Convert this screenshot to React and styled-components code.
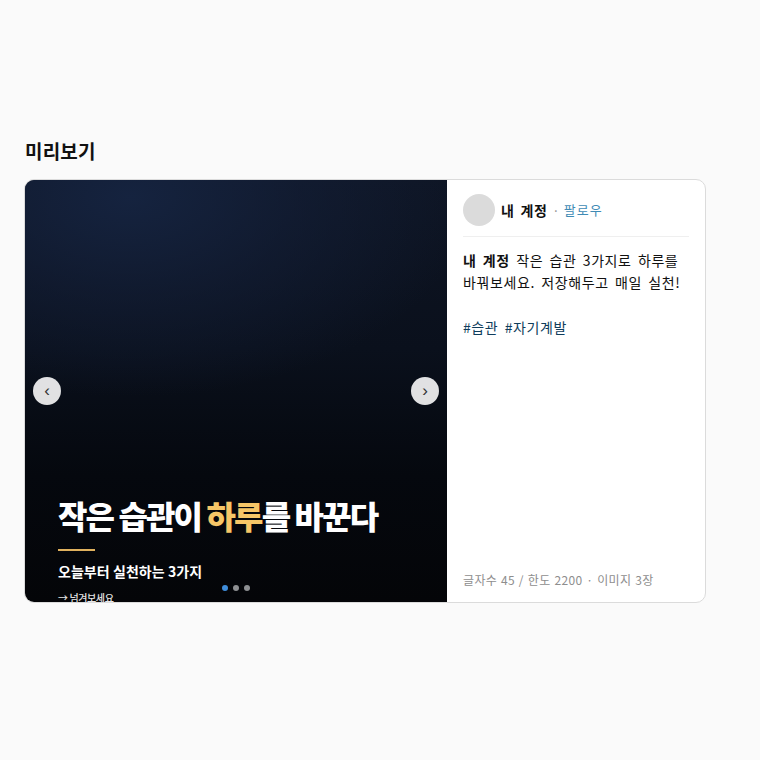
import styled, { createGlobalStyle } from "styled-components";

const GlobalStyle = createGlobalStyle`
  html, body {
    margin: 0;
    background: #fafafa;
    font-family: "Noto Sans CJK KR", "Noto Sans", sans-serif;
    color: #111;
  }
`;

const Page = styled.div`
  width: 760px;
  height: 760px;
  box-sizing: border-box;
  padding: 137px 54px 0 24px;
`;

const Heading = styled.h2`
  margin: 0 0 14px;
  padding-left: 1px;
  font-size: 19px;
  line-height: 28px;
  font-weight: 700;
  letter-spacing: 0.2px;
  color: #111;
`;

const Card = styled.div`
  display: flex;
  width: 682px;
  height: 424px;
  box-sizing: border-box;
  background: #fff;
  border: 1px solid #dbdbdb;
  border-radius: 10px;
  overflow: hidden;
`;

const Slide = styled.div`
  position: relative;
  flex: 0 0 422px;
  height: 422px;
  overflow: hidden;
  background:
    radial-gradient(ellipse 340px 200px at 25% 4%, #15233f 0%, rgba(20, 32, 58, 0.55) 50%, rgba(10, 14, 24, 0) 100%),
    linear-gradient(180deg, #0e1524 0%, #0a101c 40%, #05080e 70%, #040508 100%);
`;

const SlideText = styled.div`
  display: flex;
  flex-direction: column;
  padding: 310px 0 0 33px;
  color: #fff;
`;

const SlideTitle = styled.div`
  font-size: 32px;
  line-height: 50px;
  font-weight: 900;
  letter-spacing: -1.9px;
  white-space: nowrap;
`;

const Accent = styled.span`
  color: #f6c667;
`;

const Rule = styled.div`
  width: 37px;
  height: 2px;
  margin: 9px 0 9px;
  background: #e0b15e;
`;

const SlideSub = styled.div`
  font-size: 14px;
  line-height: 22px;
  font-weight: 700;
  letter-spacing: 0.05px;
`;

const SlideHint = styled.div`
  margin-top: 8px;
  font-size: 10px;
  line-height: 16px;
  font-weight: 500;
  letter-spacing: -0.4px;
  color: #e6e6e6;
`;

const NavButton = styled.button`
  position: absolute;
  top: 197px;
  ${(props) => (props.$side === "left" ? "left: 8px;" : "right: 8px;")}
  display: flex;
  align-items: center;
  justify-content: center;
  width: 28px;
  height: 28px;
  padding: 0 0 2px;
  border: none;
  border-radius: 50%;
  background: rgba(255, 255, 255, 0.88);
  color: #333;
  font-family: "Liberation Sans", sans-serif;
  font-size: 17px;
  font-weight: 400;
  line-height: 1;
`;

const Dots = styled.div`
  position: absolute;
  left: 197px;
  bottom: 11px;
  display: flex;
  gap: 5px;
`;

const Dot = styled.span`
  width: 6px;
  height: 6px;
  border-radius: 50%;
  background: ${(props) => (props.$active ? "#3f8ddb" : "#8d8f92")};
`;

const Side = styled.div`
  display: flex;
  flex: 1;
  flex-direction: column;
  min-width: 0;
  padding: 0 16px;
`;

const Profile = styled.div`
  display: flex;
  align-items: center;
  gap: 6px;
  padding: 14px 0 10px;
  border-bottom: 1px solid #efefef;
`;

const Avatar = styled.div`
  width: 32px;
  height: 32px;
  border-radius: 50%;
  background: #dbdbdb;
`;

const Name = styled.span`
  font-size: 14px;
  font-weight: 700;
  line-height: 20px;
  letter-spacing: 0.5px;
  word-spacing: 2.5px;
  color: #111;
`;

const Sep = styled.span`
  margin-left: -1px;
  font-size: 13px;
  color: #8e8e8e;
`;

const Follow = styled.span`
  margin-left: -2px;
  font-size: 13px;
  font-weight: 400;
  line-height: 20px;
  letter-spacing: 1.1px;
  color: #3f8bb5;
`;

const Caption = styled.div`
  margin-top: 12px;
  font-size: 14px;
  line-height: 22.4px;
  letter-spacing: 0.6px;
  word-spacing: 2.6px;
  color: #111;
`;

const Strong = styled.strong`
  font-weight: 700;
`;

const Tags = styled.div`
  margin-top: 22.4px;
  font-size: 14px;
  line-height: 22.4px;
  letter-spacing: 0.6px;
  word-spacing: 2.6px;
  color: #0f3d5c;
`;

const Meta = styled.div`
  margin-top: auto;
  padding-bottom: 12px;
  font-size: 12px;
  line-height: 20px;
  letter-spacing: 0.35px;
  word-spacing: 0.8px;
  color: #8e8e8e;
`;

export default function App() {
  return (
    <Page>
      <GlobalStyle />
      <Heading>미리보기</Heading>
      <Card>
        <Slide>
          <SlideText>
            <SlideTitle>
              작은 습관이 <Accent>하루</Accent>를 바꾼다
            </SlideTitle>
            <Rule />
            <SlideSub>오늘부터 실천하는 3가지</SlideSub>
            <SlideHint>→ 넘겨보세요</SlideHint>
          </SlideText>
          <NavButton $side="left">‹</NavButton>
          <NavButton $side="right">›</NavButton>
          <Dots>
            <Dot $active />
            <Dot />
            <Dot />
          </Dots>
        </Slide>
        <Side>
          <Profile>
            <Avatar />
            <Name>내 계정</Name>
            <Sep>·</Sep>
            <Follow>팔로우</Follow>
          </Profile>
          <Caption>
            <Strong>내 계정</Strong> 작은 습관 3가지로 하루를 바꿔보세요. 저장해두고 매일 실천!
          </Caption>
          <Tags>#습관 #자기계발</Tags>
          <Meta>글자수 45 / 한도 2200 · 이미지 3장</Meta>
        </Side>
      </Card>
    </Page>
  );
}
